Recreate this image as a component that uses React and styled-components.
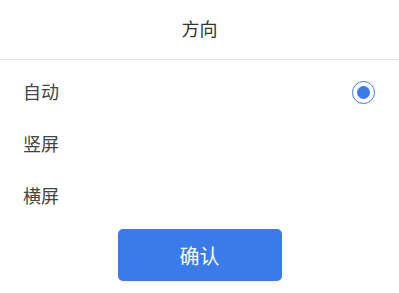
import React, { useState } from 'react'
import styled, { createGlobalStyle } from 'styled-components'

const GlobalStyle = createGlobalStyle`
  html, body {
    margin: 0;
    padding: 0;
    background: #fff;
  }
  body {
    font-family: "Noto Sans CJK SC", "Noto Sans", sans-serif;
  }
`

const Sheet = styled.div`
  width: 399px;
  height: 293px;
  background: #fff;
  display: flex;
  flex-direction: column;
`

const Header = styled.div`
  height: 56px;
  padding-bottom: 3px;
  display: flex;
  align-items: center;
  justify-content: center;
  border-bottom: 1px solid #e6e6e6;
  font-size: 18px;
  color: #333;
`

const List = styled.div`
  display: flex;
  flex-direction: column;
  padding-top: 6px;
`

const Row = styled.div`
  height: 52px;
  display: flex;
  align-items: center;
  justify-content: space-between;
  padding: 0 24px 0 23px;
  font-size: 18px;
  color: #444;
  cursor: pointer;
`

const Label = styled.span`
  line-height: 1;
  padding-bottom: 2px;
`

const Radio = styled.span`
  width: 21px;
  height: 21px;
  border-radius: 50%;
  border: 1.5px solid #3a7bea;
  display: flex;
  align-items: center;
  justify-content: center;
  &::after {
    content: '';
    width: 13px;
    height: 13px;
    border-radius: 50%;
    background: #3a7bea;
  }
`

const Footer = styled.div`
  display: flex;
  justify-content: center;
  padding-top: 7px;
`

const ConfirmButton = styled.button`
  width: 164px;
  height: 52px;
  border: none;
  border-radius: 5px;
  background: #3a7bea;
  color: #fff;
  font-family: inherit;
  font-size: 20px;
  cursor: pointer;
`

const options = ['自动', '竖屏', '横屏']

export default function App() {
  const [selected, setSelected] = useState(0)
  return (
    <>
      <GlobalStyle />
      <Sheet>
        <Header>方向</Header>
        <List>
          {options.map((label, i) => (
            <Row key={label} onClick={() => setSelected(i)}>
              <Label>{label}</Label>
              {selected === i && <Radio />}
            </Row>
          ))}
        </List>
        <Footer>
          <ConfirmButton>确认</ConfirmButton>
        </Footer>
      </Sheet>
    </>
  )
}
